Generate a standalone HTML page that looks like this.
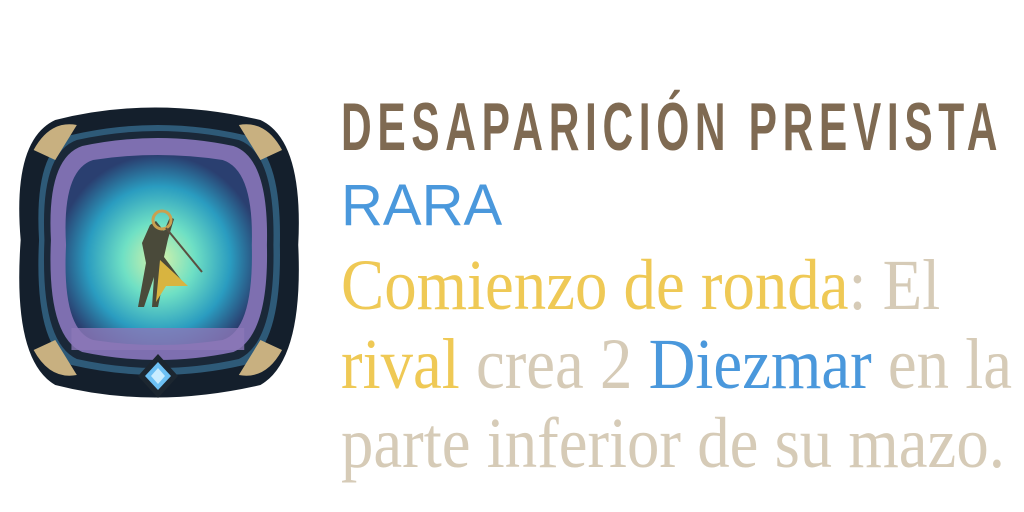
<!DOCTYPE html>
<html><head><meta charset="utf-8"><style>
html,body{margin:0;padding:0;background:#fff;width:1024px;height:512px;overflow:hidden;position:relative}
.t{position:absolute;left:341px;white-space:nowrap;transform-origin:left top}
.title{top:88px;font:bold 68px "Liberation Sans",sans-serif;color:#7f6a52;letter-spacing:9px;transform:scaleX(0.6)}
.rara{top:172px;font:58px "Liberation Sans",sans-serif;color:#4a98dc}
.b{font:72px "Liberation Serif",serif;color:#d6cbb7;transform:scaleX(0.9)}
.y{color:#efc955}.bl{color:#4a98dc}
</style></head><body>
<svg width="320" height="420" style="position:absolute;left:0;top:0">
<defs>
<radialGradient id="g" cx="50%" cy="55%" r="55%">
<stop offset="0" stop-color="#d9f2a8"/><stop offset="0.35" stop-color="#6fe0c4"/><stop offset="0.7" stop-color="#2a9cc0"/><stop offset="1" stop-color="#2a3f70"/></radialGradient>
</defs>
<g transform="translate(160 250) scale(1.08 1.0) translate(-157 -240)">
<path d="M28 230 Q20 130 60 110 Q150 85 250 110 Q290 130 285 235 Q290 350 250 375 Q150 400 60 375 Q20 350 28 230Z" fill="#141f2c"/>
<path d="M45 230 Q40 140 75 125 Q155 105 235 125 Q270 140 268 235 Q270 335 235 355 Q155 375 75 355 Q40 335 45 230Z" fill="#2e5a78" />
<path d="M50 230 Q46 143 80 130 Q155 112 230 130 Q264 143 262 235 Q264 332 230 349 Q155 367 80 349 Q46 332 50 230Z" fill="#1a2838"/>
<path d="M56 230 Q52 148 85 136 Q155 120 225 136 Q258 148 256 235 Q258 326 225 342 Q155 358 85 342 Q52 326 56 230Z" fill="#7e6fb0"/>
<path d="M70 235 Q66 160 95 150 Q155 140 215 150 Q244 160 242 235 Q244 320 215 330 Q155 340 95 330 Q66 320 70 235Z" fill="url(#g)"/>
<rect x="75" y="318" width="160" height="22" fill="#8c78b8" opacity=".8"/>
<path d="M40 140 Q55 110 80 115 L60 150Z M270 140 Q255 110 230 115 L250 150Z M40 340 Q55 370 80 365 L60 330Z M270 340 Q255 370 230 365 L250 330Z" fill="#c8b080"/>
</g>
<path d="M150 225 l6 -4 l8 10 l6 -14 l4 2 l-6 20 l-4 18 l18 24 l-18 -4 l-6 30 l-6 0 l2 -30 l-10 30 l-6 0 l8 -44 l-4 -20 z" fill="#4a4a3a"/>
<path d="M160 260 l28 26 l-22 0 l-10 16 z" fill="#d8b440"/>
<circle cx="162" cy="220" r="9" fill="none" stroke="#c9a050" stroke-width="3"/>
<line x1="166" y1="228" x2="202" y2="272" stroke="#5a5040" stroke-width="2"/>
<path d="M158 354 l20 22 l-20 22 l-20 -22z" fill="#1c2630"/>
<path d="M158 362 l13 14 l-13 14 l-13 -14z" fill="#6cc0f4"/>
<path d="M158 368 l7 8 l-7 8 l-7 -8z" fill="#c8ecff"/>
</svg>
<div class="t title" style="transform:scaleX(0.625)">DESAPARICIÓN PREVISTA</div>
<div class="t rara">RARA</div>
<div class="t b" style="top:244px"><span class="y">Comienzo de ronda</span>: El</div>
<div class="t b" style="top:323px"><span class="y">rival</span> crea 2 <span class="bl">Diezmar</span> en la</div>
<div class="t b" style="top:402px">parte inferior de su mazo.</div>
</body></html>
